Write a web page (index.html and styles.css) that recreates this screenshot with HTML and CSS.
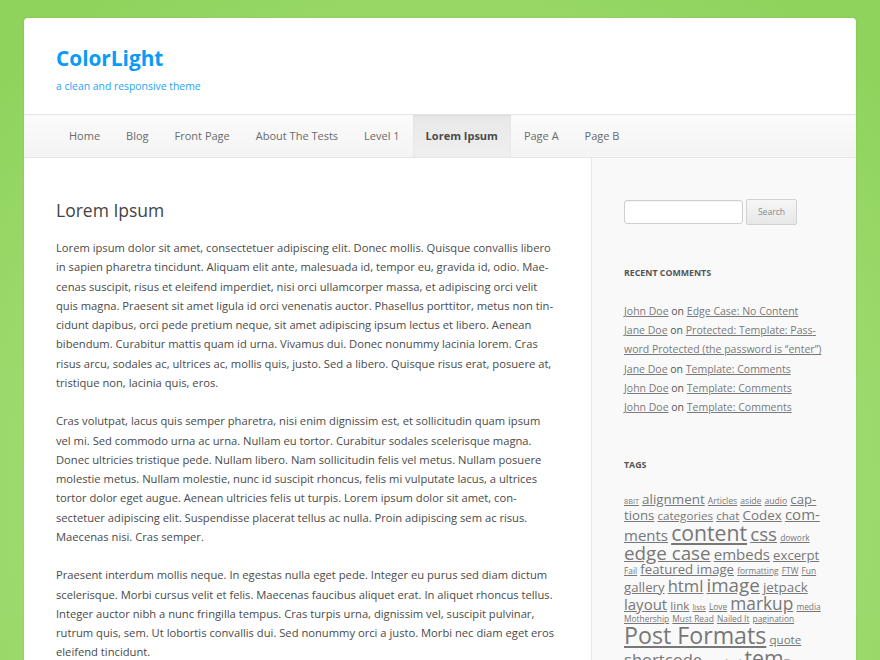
FILE: index.html
```html
<!DOCTYPE html>
<html lang="en">
<head>
<meta charset="utf-8">
<title>ColorLight</title>
<link rel="stylesheet" href="styles.css">
</head>
<body>
<div class="page">
  <header class="site-header">
    <div class="site-title">ColorLight</div>
    <div class="site-desc">a clean and responsive theme</div>
  </header>
  <nav class="menu">
    <ul>
      <li><a href="#">Home</a></li>
      <li><a href="#">Blog</a></li>
      <li><a href="#">Front Page</a></li>
      <li><a href="#">About The Tests</a></li>
      <li><a href="#">Level 1</a></li>
      <li class="current"><a href="#">Lorem Ipsum</a></li>
      <li><a href="#">Page A</a></li>
      <li><a href="#">Page B</a></li>
    </ul>
  </nav>
  <div class="body">
    <main class="content">
      <h1 class="entry-title">Lorem Ipsum</h1>
      <p>Lorem ipsum dolor sit amet, consectetuer adipiscing elit. Donec mollis. Quisque convallis libero in sapien pharetra tincidunt. Aliquam elit ante, malesuada id, tempor eu, gravida id, odio. Mae&shy;cenas suscipit, risus et eleifend imperdiet, nisi orci ullamcorper massa, et adipiscing orci velit quis magna. Praesent sit amet ligula id orci venenatis auctor. Phasellus porttitor, metus non tin&shy;cidunt dapibus, orci pede pretium neque, sit amet adipiscing ipsum lectus et libero. Aenean bibendum. Curabitur mattis quam id urna. Vivamus dui. Donec nonummy lacinia lorem. Cras risus arcu, sodales ac, ultrices ac, mollis quis, justo. Sed a libero. Quisque risus erat, posuere at, tristique non, lacinia quis, eros.</p>
      <p>Cras volutpat, lacus quis semper pharetra, nisi enim dignissim est, et sollicitudin quam ipsum vel mi. Sed commodo urna ac urna. Nullam eu tortor. Curabitur sodales scelerisque magna. Donec ultricies tristique pede. Nullam libero. Nam sollicitudin felis vel metus. Nullam posuere molestie metus. Nullam molestie, nunc id suscipit rhoncus, felis mi vulputate lacus, a ultrices tortor dolor eget augue. Aenean ultricies felis ut turpis. Lorem ipsum dolor sit amet, con&shy;sectetuer adipiscing elit. Suspendisse placerat tellus ac nulla. Proin adipiscing sem ac risus. Maecenas nisi. Cras semper.</p>
      <p>Praesent interdum mollis neque. In egestas nulla eget pede. Integer eu purus sed diam dictum scelerisque. Morbi cursus velit et felis. Maecenas faucibus aliquet erat. In aliquet rhoncus tellus. Integer auctor nibh a nunc fringilla tempus. Cras turpis urna, dignissim vel, suscipit pulvinar, rutrum quis, sem. Ut lobortis convallis dui. Sed nonummy orci a justo. Morbi nec diam eget eros eleifend tincidunt.</p>
    </main>
    <aside class="sidebar">
      <section class="widget search-widget">
        <form class="search-form">
          <input class="search-field" type="text">
          <button class="search-button" type="button">Search</button>
        </form>
      </section>
      <section class="widget">
        <h3 class="widget-title">Recent Comments</h3>
        <ul class="comments">
          <li><a href="#">John Doe</a> on <a href="#">Edge Case: No Content</a></li>
          <li><a href="#">Jane Doe</a> on <a href="#">Protected: Template: Pass&shy;word Protected (the password is “enter”)</a></li>
          <li><a href="#">Jane Doe</a> on <a href="#">Template: Comments</a></li>
          <li><a href="#">John Doe</a> on <a href="#">Template: Comments</a></li>
          <li><a href="#">John Doe</a> on <a href="#">Template: Comments</a></li>
        </ul>
      </section>
      <section class="widget">
        <h3 class="widget-title">Tags</h3>
        <div class="tagcloud">
          <a href="#" class="t7">8BIT</a>
          <a href="#" class="t14">alignment</a>
          <a href="#" class="t9">Articles</a>
          <a href="#" class="t9">aside</a>
          <a href="#" class="t9">audio</a>
          <a href="#" class="t13">cap&shy;tions</a>
          <a href="#" class="t12">categories</a>
          <a href="#" class="t12">chat</a>
          <a href="#" class="t14">Codex</a>
          <a href="#" class="t15">com&shy;ments</a>
          <a href="#" class="t22">content</a>
          <a href="#" class="t19">css</a>
          <a href="#" class="t8">dowork</a>
          <a href="#" class="t19">edge case</a>
          <a href="#" class="t15">embeds</a>
          <a href="#" class="t13">excerpt</a>
          <a href="#" class="t8">Fail</a>
          <a href="#" class="t13">featured image</a>
          <a href="#" class="t8">formatting</a>
          <a href="#" class="t8">FTW</a>
          <a href="#" class="t8">Fun</a>
          <a href="#" class="t13">gallery</a>
          <a href="#" class="t17">html</a>
          <a href="#" class="t19">image</a>
          <a href="#" class="t14">jetpack</a>
          <a href="#" class="t15">layout</a>
          <a href="#" class="t12">link</a>
          <a href="#" class="t7">lists</a>
          <a href="#" class="t8">Love</a>
          <a href="#" class="t18">markup</a>
          <a href="#" class="t8">media</a>
          <a href="#" class="t8">Mothership</a>
          <a href="#" class="t8">Must Read</a>
          <a href="#" class="t8">Nailed It</a>
          <a href="#" class="t8">pagination</a>
          <a href="#" class="t24">Post Formats</a>
          <a href="#" class="t12">quote</a>
          <a href="#" class="t17">shortcode</a>
          <a href="#" class="t9">standard</a>
          <a href="#" class="t22">tem&shy;plate</a>
        </div>
      </section>
    </aside>
  </div>
</div>
</body>
</html>
```
FILE: styles.css
```css
html, body {
  margin: 0;
  padding: 0;
}
body {
  min-height: 660px;
  background: radial-gradient(ellipse 70% 90% at 50% 75%, #b6e894 0%, #a2dd75 55%, #8fd35c 100%) fixed;
  font-family: "Open Sans", "DejaVu Sans", sans-serif;
  color: #4a4a4a;
}
.page {
  width: 832px;
  margin: 18px auto 0;
  background: #fff;
  border-radius: 4px 4px 0 0;
  box-shadow: 0 0 3px rgba(0, 0, 0, 0.08);
  overflow: hidden;
}
.site-header {
  padding: 26px 32px 20px;
}
.site-title {
  font-size: 20.8px;
  font-weight: 700;
  line-height: 28px;
  color: #0a9bf6;
}
.site-desc {
  margin-top: 6px;
  font-size: 10.4px;
  line-height: 16px;
  color: #1ea3f4;
}
.menu {
  border-top: 1px solid #e6e6e6;
  border-bottom: 1px solid #e6e6e6;
  background: linear-gradient(#fbfbfb, #f4f4f4);
}
.menu ul {
  list-style: none;
  margin: 0;
  padding: 0 32px;
  display: flex;
}
.menu a {
  display: block;
  padding: 0 13px;
  line-height: 42px;
  font-size: 11px;
  color: #6a6a6a;
  text-decoration: none;
}
.menu .current a {
  font-weight: 700;
  color: #4a4a4a;
  background: linear-gradient(#e8e8e8, #efefef);
  box-shadow: inset 0 1px 3px rgba(0, 0, 0, 0.05);
}
.body {
  display: grid;
  grid-template-columns: 567px 265px;
}
.content {
  padding: 40px 35px 20px 32px;
}
.entry-title {
  margin: 0 0 16px;
  font-size: 17.5px;
  line-height: 24px;
  font-weight: 400;
  color: #444;
}
.content p {
  margin: 0 0 19.25px;
  font-size: 11.2px;
  line-height: 19.25px;
}
.sidebar {
  background: #f9f9f9;
  border-left: 1px solid #e8e8e8;
  padding: 41px 32px 0;
}
.widget {
  margin-bottom: 39px;
}
.search-form {
  display: flex;
  align-items: center;
  gap: 3px;
}
.search-field {
  box-sizing: border-box;
  width: 119px;
  height: 24px;
  margin: 0;
  border: 1px solid #cfcfcf;
  border-radius: 3px;
  background: #fff;
  box-shadow: inset 0 1px 1px rgba(0, 0, 0, 0.04);
}
.search-button {
  box-sizing: border-box;
  width: 51px;
  height: 26px;
  margin: 0;
  border: 1px solid #d2d2d2;
  border-radius: 2px;
  background: linear-gradient(#f6f6f6, #e7e7e7);
  font-family: "Open Sans", sans-serif;
  font-size: 8.6px;
  color: #8a8a8a;
  padding: 0;
}
.widget-title {
  margin: 0 0 20px;
  font-size: 8.8px;
  line-height: 18px;
  font-weight: 700;
  text-transform: uppercase;
  color: #555;
}
.comments {
  list-style: none;
  margin: 0;
  padding: 0;
  font-size: 10.5px;
  line-height: 19.2px;
  color: #555;
}
.comments a {
  color: #7a7a7a;
  text-decoration: underline;
}
.tagcloud {
  font-size: 12px;
  line-height: 1;
  margin-top: -1px;
}
.tagcloud a {
  color: #777;
  text-decoration: underline;
}
.t7 { font-size: 7.3px; }
.t8 { font-size: 8.4px; }
.t9 { font-size: 8.6px; }
.t12 { font-size: 11.6px; }
.t13 { font-size: 13.2px; }
.t14 { font-size: 13.4px; }
.t15 { font-size: 15px; }
.t16 { font-size: 15.8px; }
.t17 { font-size: 16.6px; }
.t18 { font-size: 17.3px; }
.t19 { font-size: 18.8px; }
.t22 { font-size: 21.2px; }
.t24 { font-size: 23.2px; }
```
